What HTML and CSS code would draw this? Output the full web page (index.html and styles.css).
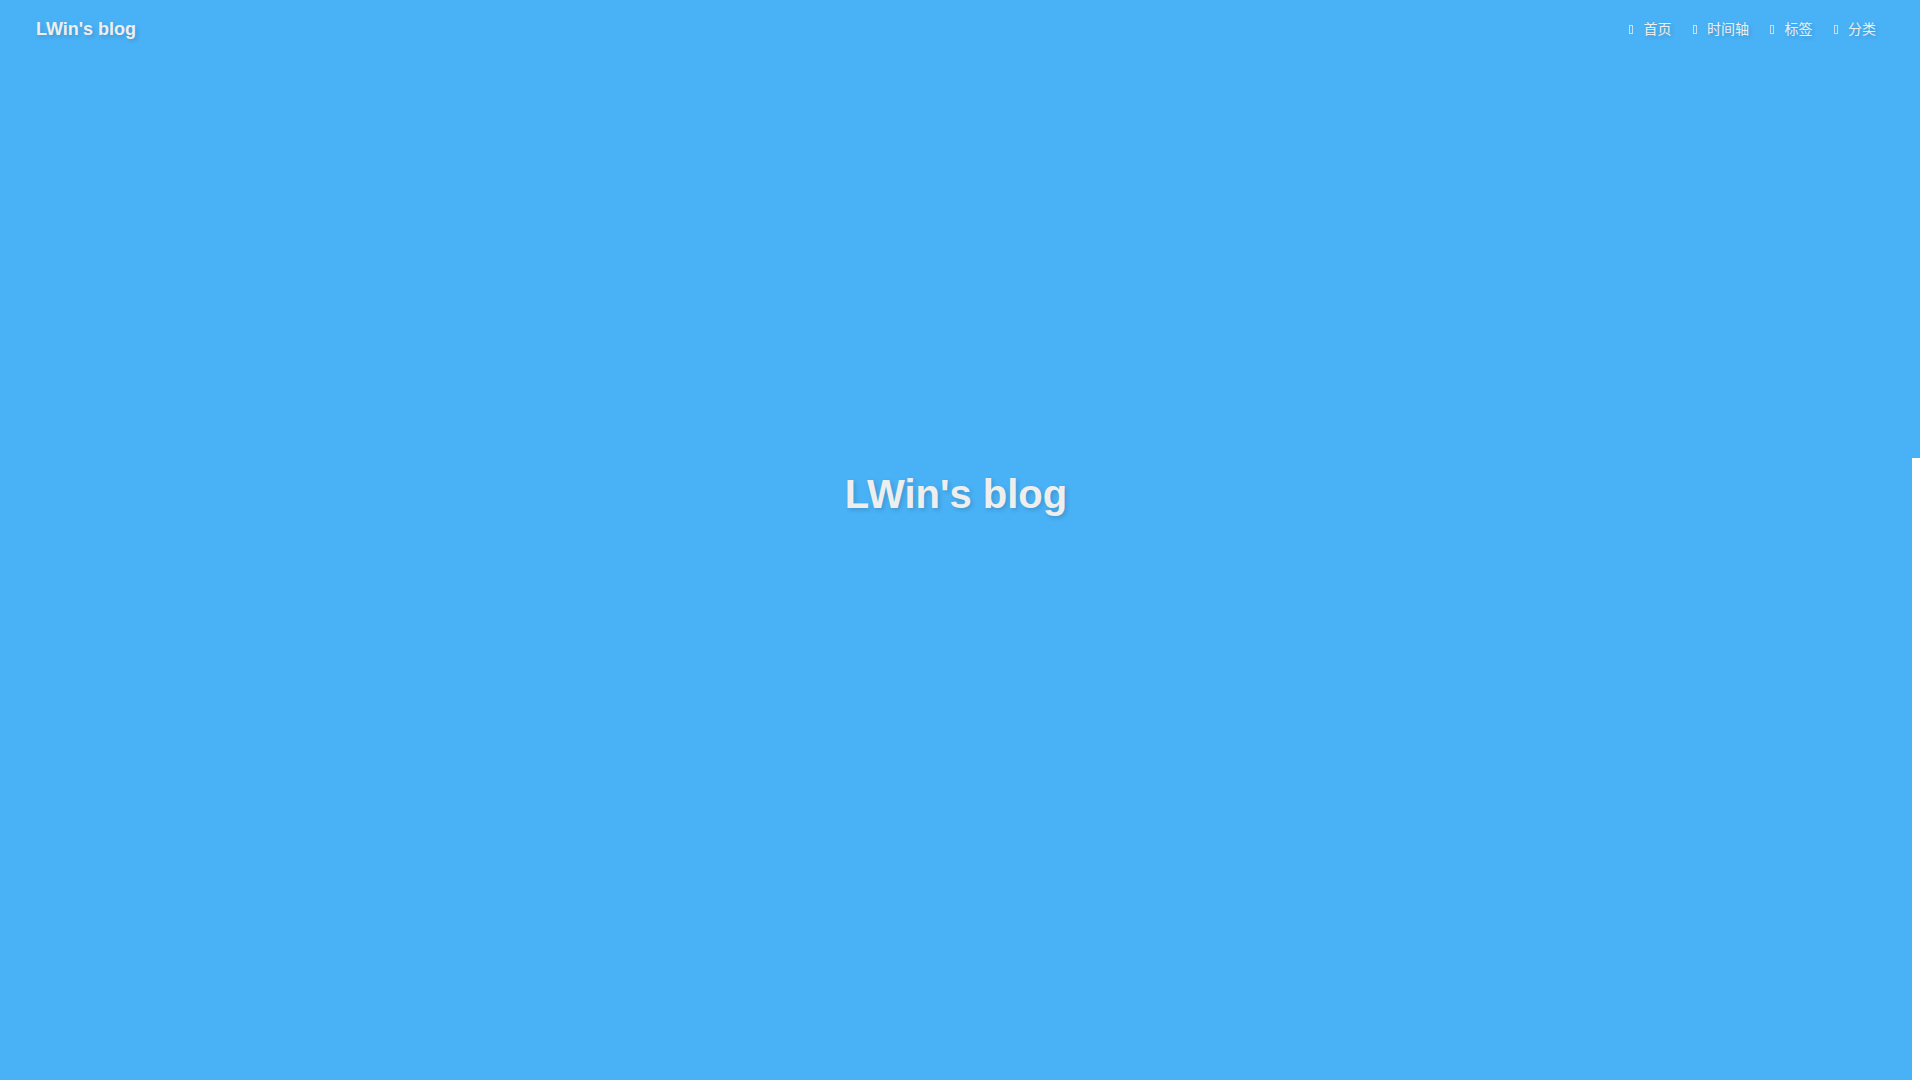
FILE: index.html
```html
<!DOCTYPE html>
<html lang="zh-CN">
<head>
<meta charset="utf-8">
<title>LWin's blog</title>
<link rel="stylesheet" href="styles.css">
</head>
<body>
<header class="page-header">
  <nav class="nav">
    <a class="site-name" href="#">LWin's blog</a>
    <div class="menus">
      <a class="menu-item" href="#"><span class="icon"></span><span class="label">首页</span></a>
      <a class="menu-item" href="#"><span class="icon"></span><span class="label">时间轴</span></a>
      <a class="menu-item" href="#"><span class="icon"></span><span class="label">标签</span></a>
      <a class="menu-item" href="#"><span class="icon"></span><span class="label">分类</span></a>
    </div>
  </nav>
  <div class="site-info">
    <h1 class="site-title">LWin's blog</h1>
  </div>
</header>
<div class="scroll-track"></div>
</body>
</html>
```

FILE: styles.css
```css
html, body {
  margin: 0;
  padding: 0;
  height: 100%;
  overflow: hidden;
}
body {
  background: #49b1f5;
  font-family: "Liberation Sans", Arial, "Noto Sans CJK SC", sans-serif;
  color: #eee;
}
.page-header {
  height: 100vh;
  width: calc(100% - 8px);
  display: flex;
  flex-direction: column;
}
.nav {
  height: 60px;
  display: flex;
  justify-content: space-between;
  padding: 0 36px;
}
.site-name {
  font-size: 18px;
  line-height: 58px;
  font-weight: bold;
  color: #eee;
  text-decoration: none;
  text-shadow: 2px 2px 4px rgba(0, 0, 0, 0.15);
}
.menus {
  display: flex;
  gap: 21px;
  font-size: 14px;
  line-height: 57px;
  height: 57px;
}
.menu-item {
  display: flex;
  align-items: center;
  color: #eee;
  text-decoration: none;
  text-shadow: 2px 2px 4px rgba(0, 0, 0, 0.15);
}
.icon {
  display: inline-block;
  width: 2px;
  height: 7px;
  border: 1px solid rgba(238, 238, 238, 0.75);
  margin: 0 10.5px 0 0;
  position: relative;
  top: 1px;
}
.label {
  font-family: "Noto Sans CJK SC", "Liberation Sans", sans-serif;
}
.site-info {
  text-align: center;
  margin-top: 410px;
}
.site-title {
  margin: 0;
  font-size: 40px;
  line-height: 48px;
  font-weight: bold;
  color: #eee;
  text-shadow: 2px 2px 4px rgba(0, 0, 0, 0.15);
}
.scroll-track {
  position: absolute;
  right: 0;
  top: 458px;
  bottom: 0;
  width: 8px;
  background: #fff;
}
```
